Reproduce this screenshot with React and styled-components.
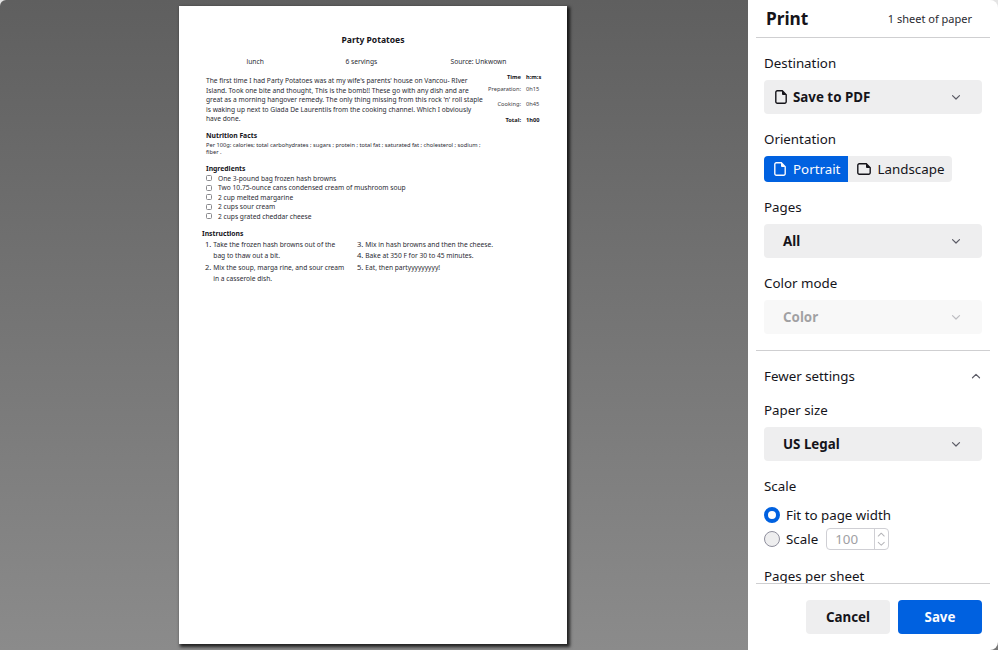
import React from "react";
import styled, { createGlobalStyle, css } from "styled-components";

const Global = createGlobalStyle`
  * { box-sizing: border-box; }
  body { margin: 0; background: linear-gradient(#e4e4e4, #777) 0 0 / 100% 650px; overflow: hidden; }
  p, h1, h2, h3, ul, ol { margin: 0; padding: 0; list-style: none; }
  button, input { font: inherit; color: inherit; border: 0; margin: 0; }
`;

const Dialog = styled.div`
  display: flex;
  width: 998px;
  height: 650px;
  overflow: hidden;
  border-radius: 6px 8px 8px 0;
  font-family: "Noto Sans", sans-serif;
  font-size: 13.33px;
  color: #15141a;
`;

const Preview = styled.div`
  flex: 0 0 748px;
  padding: 6px 0 6px 179px;
  background: linear-gradient(#5f5f5f, #8b8b8b);
`;

const Paper = styled.article`
  width: 388px;
  height: 638px;
  background: #fff;
  box-shadow: 2px 2px 3px 1px rgba(0, 0, 0, 0.75);
  color: #2b2b33;
  font-size: 6.66px;
  white-space: nowrap;
`;

const RecipeTitle = styled.h1`
  padding-top: 28px;
  font-size: 8.55px;
  line-height: 12px;
  text-align: center;
  color: #15141a;
`;

const MetaRow = styled.div`
  display: grid;
  grid-template-columns: 99px 105px auto;
  margin: 10px 0 0 67.5px;
  line-height: 11px;
`;

const Summary = styled.div`
  display: grid;
  grid-template-columns: 280px auto;
  margin: 4px 0 0 27px;
`;

const Intro = styled.p`
  padding-top: 5px;
  line-height: 9.5px;
`;

const Times = styled.dl`
  display: grid;
  grid-template-columns: 35px auto;
  grid-template-rows: 12px 15.5px 15.5px;
  column-gap: 5px;
  width: 65px;
  margin: 1.5px 0 0 0;
  line-height: 9px;
  font-size: 5.7px;
`;

const TimeCell = styled.span`
  font-weight: ${(p) => (p.$bold ? 700 : 400)};
  text-align: ${(p) => (p.$label ? "right" : "left")};
  color: ${(p) => (p.$bold ? "#15141a" : "#3c3c44")};
`;

const SectionTitle = styled.h2`
  margin: ${(p) => p.$top}px 0 0 ${(p) => p.$left || 27}px;
  font-size: 6.8px;
  line-height: 10px;
  color: #15141a;
`;

const Facts = styled.p`
  margin-left: 27px;
  padding-top: 0.8px;
  font-size: 5.7px;
  line-height: 7.3px;
`;

const Ingredient = styled.li`
  display: flex;
  align-items: center;
  gap: 6px;
  height: 9.5px;
  margin-left: 27px;
`;

const Box = styled.span`
  width: 6px;
  height: 6px;
  border: 1px solid #8a8a8e;
  border-radius: 1.5px;
`;

const Steps = styled.div`
  display: grid;
  grid-template-columns: 152px auto;
  margin-left: 26px;
`;

const Step = styled.li`
  display: grid;
  grid-template-columns: 8.3px auto;
  line-height: 11px;
  margin-bottom: ${(p) => p.$gap || 0}px;
`;

const StepNumber = styled.span`
  font-size: 7.6px;
`;

const Sidebar = styled.aside`
  display: flex;
  flex-direction: column;
  flex: 1;
  padding: 0 8px;
  background: #fff;
`;

const Header = styled.header`
  display: flex;
  flex: 0 0 38px;
  align-items: center;
  justify-content: space-between;
  padding: 0 18px 0 10px;
  border-bottom: 1px solid #cfcfd1;
`;

const HeaderTitle = styled.h2`
  font-size: 17.3px;
  line-height: 24px;
`;

const SheetCount = styled.p`
  font-size: 11px;
  color: #2a2a31;
`;

const Settings = styled.main`
  flex: 0 0 545px;
  overflow: hidden;
`;

const Group = styled.section`
  padding: ${(p) => p.$top || 0}px 8px 0;
`;

const Label = styled.h3`
  height: 20px;
  margin: ${(p) => p.$top || 0}px 0 7px;
  font-size: 13.33px;
  font-weight: 400;
  line-height: 20px;
`;

const SelectButton = styled.button`
  display: flex;
  align-items: center;
  width: 218px;
  height: 34px;
  padding: 0 21px 0 ${(p) => (p.$icon ? 11 : 19)}px;
  border-radius: 4px;
  background: #eeeeef;
  font-weight: 700;
  line-height: 18px;
  text-align: left;
  opacity: ${(p) => (p.disabled ? 0.4 : 1)};
`;

const SelectText = styled.span`
  flex: 1;
  margin-left: ${(p) => (p.$icon ? 6 : 0)}px;
`;

const Segments = styled.div`
  display: flex;
  width: 188px;
  height: 26px;
  border-radius: 4px;
  overflow: hidden;
`;

const Segment = styled.button`
  display: flex;
  align-items: center;
  gap: ${(p) => p.$gap}px;
  width: ${(p) => p.$width}px;
  padding: 0 0 0 ${(p) => p.$pad}px;
  line-height: 18px;
  background: #eeeeef;
  ${(p) => p.$active && css`background: #0061e0; color: #fbfbfe;`}
`;

const Divider = styled.div`
  height: 1px;
  margin-top: 16px;
  background: #cfcfd1;
`;

const Toggle = styled.button`
  display: flex;
  align-items: center;
  justify-content: space-between;
  width: 100%;
  height: 20px;
  padding: 0 1px 0 0;
  background: none;
  line-height: 18px;
`;

const RadioRow = styled.label`
  display: flex;
  align-items: center;
  height: 24px;
  line-height: 18px;
`;

const Radio = styled.span`
  width: 16px;
  height: 16px;
  margin-right: 6px;
  border-radius: 50%;
  border: 1px solid #8f8f9d;
  background: #eeeeef;
  ${(p) => p.$checked && css`border: 4px solid #0061e0; background: #fff;`}
`;

const NumberField = styled.span`
  display: flex;
  width: 63px;
  height: 22px;
  margin-left: 8px;
  border: 1px solid #cfcfd4;
  border-radius: 4px;
  color: #a0a0a4;
  line-height: 20px;
`;

const NumberValue = styled.span`
  flex: 1;
  padding-left: 8px;
`;

const Spinner = styled.span`
  display: flex;
  flex-direction: column;
  align-items: center;
  justify-content: space-evenly;
  width: 14px;
  padding-right: 1px;
  border-left: 1px solid #cfcfd4;
`;

const Footer = styled.footer`
  display: flex;
  flex: 1;
  gap: 8px;
  align-items: flex-start;
  justify-content: flex-end;
  padding: 16px 8px 0 0;
  border-top: 1px solid #cfcfd1;
`;

const ActionButton = styled.button`
  width: 84px;
  height: 34px;
  padding: 0;
  border-radius: 4px;
  font-weight: 700;
  line-height: 18px;
  background: ${(p) => (p.$primary ? "#0061e0" : "#eeeeef")};
  color: ${(p) => (p.$primary ? "#fbfbfe" : "#15141a")};
`;

function PortraitIcon() {
  return (
    <svg width="12" height="14" viewBox="0 0 12 14" fill="none">
      <path d="M2.3.8h5l3.9 3.9v7a1.5 1.5 0 0 1-1.5 1.5H2.3a1.5 1.5 0 0 1-1.5-1.5V2.3A1.5 1.5 0 0 1 2.3.8z" stroke="currentColor" strokeWidth="1.4" />
      <path d="M7 .6v3.2c0 .8.5 1.2 1.2 1.2h3.2z" fill="currentColor" />
    </svg>
  );
}

function LandscapeIcon() {
  return (
    <svg width="14" height="12" viewBox="0 0 14 12" fill="none">
      <path d="M2.3.8h7l3.9 3.9v5a1.5 1.5 0 0 1-1.5 1.5H2.3A1.5 1.5 0 0 1 .8 9.7V2.3A1.5 1.5 0 0 1 2.3.8z" stroke="currentColor" strokeWidth="1.4" />
      <path d="M9 .6v3.2c0 .8.5 1.2 1.2 1.2h3.2z" fill="currentColor" />
    </svg>
  );
}

function Chevron({ up, color = "#5b5b66", width = 10 }) {
  return (
    <svg width={width} height={width * 0.6} viewBox="0 0 10 6" fill="none">
      <path d={up ? "M1.5 4.8 5 1.4l3.5 3.4" : "M1.5 1.6 5 5l3.5-3.4"} stroke={color} strokeWidth="1.2" strokeLinecap="round" strokeLinejoin="round" />
    </svg>
  );
}

function Select({ icon, children, disabled }) {
  return (
    <SelectButton $icon={!!icon} disabled={disabled}>
      {icon}
      <SelectText $icon={!!icon}>{children}</SelectText>
      <Chevron />
    </SelectButton>
  );
}

const ingredients = [
  "One 3-pound bag frozen hash browns",
  "Two 10.75-ounce cans condensed cream of mushroom soup",
  "2 cup melted margarine",
  "2 cups sour cream",
  "2 cups grated cheddar cheese",
];

function Recipe() {
  return (
    <Paper>
      <RecipeTitle>Party Potatoes</RecipeTitle>
      <MetaRow>
        <span>lunch</span>
        <span>6 servings</span>
        <span>Source: Unkwown</span>
      </MetaRow>
      <Summary>
        <Intro>
          The first time I had Party Potatoes was at my wife's parents' house on Vancou- RIver<br />
          Island. Took one bite and thought, This is the bomb!! These go with any dish and are<br />
          great as a morning hangover remedy. The only thing missing from this rock 'n' roll staple<br />
          is waking up next to Giada De Laurentiis from the cooking channel. Which I obviously<br />
          have done.
        </Intro>
        <Times>
          <TimeCell $bold $label>Time</TimeCell>
          <TimeCell $bold>h:m:s</TimeCell>
          <TimeCell $label>Preparation:</TimeCell>
          <TimeCell>0h15</TimeCell>
          <TimeCell $label>Cooking:</TimeCell>
          <TimeCell>0h45</TimeCell>
          <TimeCell $bold $label>Total:</TimeCell>
          <TimeCell $bold>1h00</TimeCell>
        </Times>
      </Summary>
      <SectionTitle $top={6.5}>Nutrition Facts</SectionTitle>
      <Facts>
        Per 100g: calories; total carbohydrates ; sugars ; protein ; total fat ; saturated fat ; cholesterol ; sodium ;<br />
        fiber .
      </Facts>
      <SectionTitle $top={7.2}>Ingredients</SectionTitle>
      <ul>
        {ingredients.map((item) => (
          <Ingredient key={item}><Box />{item}</Ingredient>
        ))}
      </ul>
      <SectionTitle $top={7.5} $left={23}>Instructions</SectionTitle>
      <Steps>
        <ol>
          <Step $gap={1}><StepNumber>1.</StepNumber><span>Take the frozen hash browns out of the<br />bag to thaw out a bit.</span></Step>
          <Step><StepNumber>2.</StepNumber><span>Mix the soup, marga rine, and sour cream<br />in a casserole dish.</span></Step>
        </ol>
        <ol>
          <Step><StepNumber>3.</StepNumber><span>Mix in hash browns and then the cheese.</span></Step>
          <Step $gap={1}><StepNumber>4.</StepNumber><span>Bake at 350 F for 30 to 45 minutes.</span></Step>
          <Step><StepNumber>5.</StepNumber><span>Eat, then partyyyyyyyyy!</span></Step>
        </ol>
      </Steps>
    </Paper>
  );
}

export default function App() {
  return (
    <>
      <Global />
      <Dialog>
        <Preview><Recipe /></Preview>
        <Sidebar>
          <Header>
            <HeaderTitle>Print</HeaderTitle>
            <SheetCount>1 sheet of paper</SheetCount>
          </Header>
          <Settings>
            <Group $top={15}>
              <Label>Destination</Label>
              <Select icon={<PortraitIcon />}>Save to PDF</Select>
              <Label $top={15}>Orientation</Label>
              <Segments>
                <Segment $active $width={84} $pad={10} $gap={7}><PortraitIcon />Portrait</Segment>
                <Segment $width={104} $pad={9} $gap={6.6}><LandscapeIcon />Landscape</Segment>
              </Segments>
              <Label $top={15}>Pages</Label>
              <Select>All</Select>
              <Label $top={15}>Color mode</Label>
              <Select disabled>Color</Select>
            </Group>
            <Divider />
            <Group $top={15}>
              <Toggle>Fewer settings<Chevron up /></Toggle>
              <Label $top={14}>Paper size</Label>
              <Select>US Legal</Select>
              <Label $top={15}>Scale</Label>
              <RadioRow><Radio $checked />Fit to page width</RadioRow>
              <RadioRow>
                <Radio />Scale
                <NumberField>
                  <NumberValue>100</NumberValue>
                  <Spinner><Chevron up width={8.5} color="#b4b4b8" /><Chevron width={8.5} color="#b4b4b8" /></Spinner>
                </NumberField>
              </RadioRow>
              <Label $top={15}>Pages per sheet</Label>
            </Group>
          </Settings>
          <Footer>
            <ActionButton>Cancel</ActionButton>
            <ActionButton $primary>Save</ActionButton>
          </Footer>
        </Sidebar>
      </Dialog>
    </>
  );
}
